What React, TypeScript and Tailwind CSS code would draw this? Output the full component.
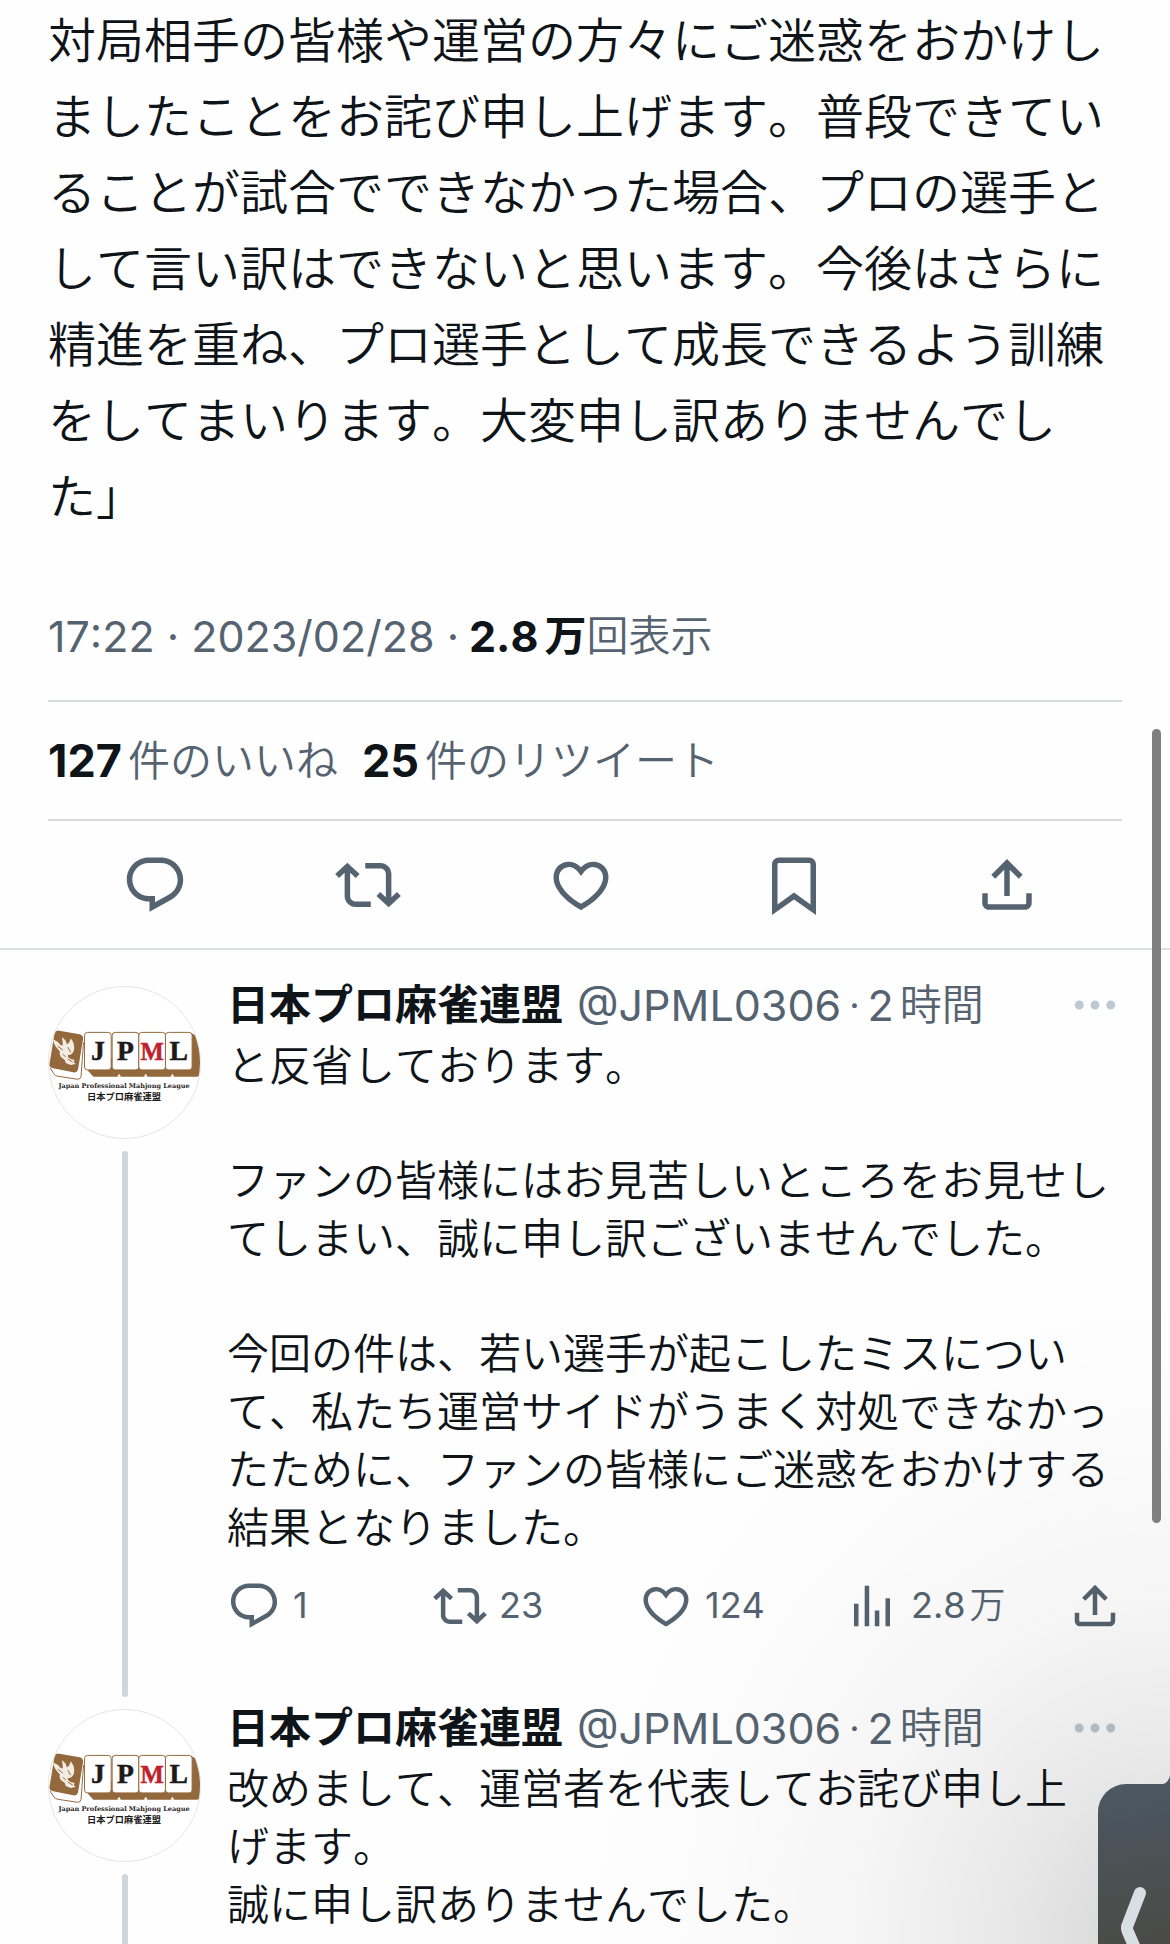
import React from "react";

const PATHS = {
  reply:
    "M1.751 10c0-4.42 3.584-8 8.005-8h4.366c4.49 0 8.129 3.64 8.129 8.13 0 2.96-1.607 5.68-4.196 7.11l-8.054 4.46v-3.69h-.067c-4.49.1-8.183-3.51-8.183-8.01zm8.005-6c-3.317 0-6.005 2.69-6.005 6 0 3.37 2.77 6.08 6.138 6.01l.351-.01h1.761v2.3l5.087-2.81c1.951-1.08 3.163-3.13 3.163-5.36 0-3.39-2.744-6.13-6.129-6.13H9.756z",
  repost:
    "M4.5 3.88l4.432 4.14-1.364 1.46L5.5 7.55V16c0 1.1.896 2 2 2H13v2H7.5c-2.209 0-4-1.79-4-4V7.55L1.432 9.48.068 8.02 4.5 3.88zM16.5 6H11V4h5.5c2.209 0 4 1.79 4 4v8.45l2.068-1.93 1.364 1.46-4.432 4.14-4.432-4.14 1.364-1.46 2.068 1.93V8c0-1.1-.896-2-2-2z",
  like: "M16.697 5.5c-1.222-.06-2.679.51-3.89 2.16l-.805 1.09-.806-1.09C9.984 6.01 8.526 5.44 7.304 5.5c-1.243.07-2.349.78-2.91 1.91-.552 1.12-.633 2.78.479 4.82 1.074 1.97 3.257 4.27 7.129 6.61 3.87-2.34 6.052-4.64 7.126-6.61 1.111-2.04 1.03-3.7.477-4.82-.561-1.13-1.666-1.84-2.908-1.91zm4.187 7.69c-1.351 2.48-4.001 5.12-8.379 7.67l-.503.3-.504-.3c-4.379-2.55-7.029-5.19-8.382-7.67-1.36-2.5-1.41-4.86-.514-6.67.887-1.79 2.647-2.91 4.601-3.01 1.651-.09 3.368.56 4.798 2.01 1.429-1.45 3.146-2.1 4.796-2.01 1.954.1 3.714 1.22 4.601 3.01.896 1.81.846 4.17-.514 6.67z",
  bookmark:
    "M4 4.5C4 3.12 5.119 2 6.5 2h11C18.881 2 20 3.12 20 4.5v18.44l-8-5.71-8 5.71V4.5zM6.5 4c-.276 0-.5.22-.5.5v14.56l6-4.29 6 4.29V4.5c0-.28-.224-.5-.5-.5h-11z",
  share:
    "M12 2.59l5.7 5.7-1.41 1.42L13 6.41V16h-2V6.41l-3.3 3.3-1.41-1.42L12 2.59zM21 15l-.02 3.51c0 1.38-1.12 2.49-2.5 2.49H5.5C4.11 21 3 19.88 3 18.5V15h2v3.5c0 .28.22.5.5.5h12.98c.28 0 .5-.22.5-.5L19 15h2z",
  views: "M8.75 21V3h2v18h-2zM18 21V8.5h2V21h-2zM4 21l.004-10h2L6 21H4zm9.248 0v-7h2v7h-2z",
  more: "M3 12c0-1.1.9-2 2-2s2 .9 2 2-.9 2-2 2-2-.9-2-2zm9 2c1.1 0 2-.9 2-2s-.9-2-2-2-2 .9-2 2 .9 2 2 2zm7 0c1.1 0 2-.9 2-2s-.9-2-2-2-2 .9-2 2 .9 2 2 2z",
};

type IconName = keyof typeof PATHS;

function Icon({ name, className }: { name: IconName; className: string }) {
  return (
    <svg viewBox="0 0 24 24" aria-hidden="true" className={className} fill="currentColor">
      <path d={PATHS[name]} />
    </svg>
  );
}

const TILES = [
  { x: 36, letter: "J", color: "#1d1a1a" },
  { x: 64, letter: "P", color: "#1d1a1a" },
  { x: 91, letter: "M", color: "#c01f2e" },
  { x: 118, letter: "L", color: "#1d1a1a" },
];

function Avatar() {
  return (
    <svg
      viewBox="0 0 153 153"
      role="img"
      aria-label="日本プロ麻雀連盟"
      className="block size-[153px] shrink-0 overflow-hidden rounded-full border border-[#e3e5e7] bg-white"
    >
      <path d="M36 81l9 10h104q5 0 5-5V61q0-10-9-14z" fill="#93683c" />
      {TILES.map((t) => (
        <g key={t.letter}>
          <rect x={t.x} y="46" width="27" height="38" rx="3" fill="#fff" stroke="#93683c" strokeWidth="1" />
          <text
            x={t.x + 13.5}
            y="74"
            textAnchor="middle"
            fontFamily="Liberation Serif, serif"
            fontWeight="700"
            fontSize={t.letter === "M" ? 25 : 28}
            fill={t.color}
            stroke={t.color}
            strokeWidth="0.5"
          >
            {t.letter}
          </text>
        </g>
      ))}
      <path d="M69 91l2-3 2 3zM96 91l2-3 2 3zM123 91l2-3 2 3z" fill="#fff" />
      <path d="M1 82l4 6q1 2 4 2.500l20 3q3 0 3.500-3L35 56" fill="#fff" stroke="#93683c" strokeWidth="1" />
      <path d="M9 44l22 4q4 1 3.500 5l-5 30q-1 4-5 3.500L3 82q-3-1-2.500-4l5-31q1-3 3.500-3z" fill="#93683c" />
      <path
        d="M4 53q5 2 8 6l2 0q0-4-1-8 4 2 5 7 3-1 4-6 5 6 3 13-2 4-6 4 0 3 3 4l4 1-1 2 2 2-5 1-5-2-1-3-4-3q-2-3-1-6-6-5-7-12z"
        fill="#f4ece2"
      />
      <path d="M9 60l5 4M19 61l3 5M14 68l3 3M19 73l5 3" stroke="#93683c" strokeWidth="1" />
      <text
        x="76"
        y="102"
        textAnchor="middle"
        fontFamily="DejaVu Serif, serif"
        fontWeight="700"
        fontSize="6.6"
        fill="#2b2626"
      >
        Japan Professional Mahjong League
      </text>
      <text
        x="76"
        y="115"
        textAnchor="middle"
        fontFamily="Noto Sans CJK JP, sans-serif"
        fontWeight="700"
        fontSize="9.400"
        fill="#1d1a1a"
      >
        日本プロ麻雀連盟
      </text>
    </svg>
  );
}

interface ReplyProps {
  paragraphs: string[];
  last?: boolean;
  children?: React.ReactNode;
}

function Reply({ paragraphs, last, children }: ReplyProps) {
  return (
    <article className={last ? "flex flex-1 gap-[26px] px-12" : "flex gap-[26px] px-12"}>
      <div className="flex flex-col items-center gap-3 pt-[10px]">
        <Avatar />
        <div
          className={
            last
              ? "w-[6px] flex-1 rounded-t-full bg-[#cfd7dd]"
              : "mb-[2px] w-[6px] flex-1 rounded-full bg-[#cfd7dd]"
          }
        />
      </div>
      <div className="min-w-0 flex-1">
        <header className="flex h-[58px] items-center text-[42px] leading-[58px] whitespace-nowrap">
          <h2 className="font-bold text-[#0f1419]">日本プロ麻雀連盟</h2>
          <p className="ml-[14px] flex items-center font-[350] text-[#556370]">
            <span className="text-[43px] font-normal">@JPML0306</span>
            <span className="mx-2 text-[36px] font-normal">·</span>
            <span className="mr-[6px] text-[43px] font-normal">2</span>時間
          </p>
          <button type="button" aria-label="もっと見る" className="ml-auto text-[#bdc9d1]">
            <Icon name="more" className="block size-[54px]" />
          </button>
        </header>
        <div className="mt-[3px] flex flex-col gap-[57px] text-[42px] leading-[58px] font-[350] text-[#0f1419]">
          {paragraphs.map((p) => (
            <p key={p} className="whitespace-pre-line">
              {p}
            </p>
          ))}
        </div>
        {children}
      </div>
    </article>
  );
}

const REPLY_ACTIONS: { name: IconName; label: string; count: string; unit?: string }[] = [
  { name: "reply", label: "返信", count: "1" },
  { name: "repost", label: "リツイート", count: "23" },
  { name: "like", label: "いいね", count: "124" },
  { name: "views", label: "表示回数", count: "2.8", unit: "万" },
];

const POST_ACTIONS: { name: IconName; label: string }[] = [
  { name: "reply", label: "返信" },
  { name: "repost", label: "リツイート" },
  { name: "like", label: "いいね" },
  { name: "bookmark", label: "ブックマーク" },
  { name: "share", label: "共有" },
];

export default function App() {
  return (
    <div
      lang="ja"
      className="relative flex min-h-screen flex-col overflow-hidden bg-[#fefefe] font-['Inter','Noto_Sans_CJK_JP',sans-serif] [font-kerning:none]"
    >
      <main className="flex flex-1 flex-col">
        <section className="px-12">
          <p className="pt-[3px] text-[48px] leading-[76px] font-[350] text-[#0f1419]">
            対局相手の皆様や運営の方々にご迷惑をおかけしましたことをお詫び申し上げます。普段できていることが試合でできなかった場合、プロの選手として言い訳はできないと思います。今後はさらに精進を重ね、プロ選手として成長できるよう訓練をしてまいります。大変申し訳ありませんでした」
          </p>
          <p className="mt-[72px] flex items-center border-b-2 border-[#d9dcdf] pb-[35px] text-[42px] leading-[58px] font-[350] text-[#556370]">
            <time className="text-[43px] font-normal">17:22 · 2023/02/28 ·</time>
            <strong className="ml-[10px] flex items-center gap-[6px] font-bold text-[#0f1419]">
              <span className="text-[43px]">2.8</span>万
            </strong>
            回表示
          </p>
          <div className="flex h-[119px] items-center gap-6 border-b-2 border-[#d5d9e0] text-[42px] font-[350] text-[#556370]">
            <a href="#likes" className="flex items-center gap-[6px]">
              <strong className="text-[45px] font-bold text-[#0f1419]">127</strong>件のいいね
            </a>
            <a href="#retweets" className="flex items-center gap-[6px]">
              <strong className="text-[45px] font-bold text-[#0f1419]">25</strong>件のリツイート
            </a>
          </div>
        </section>
        <div className="flex h-[129px] items-center border-b-2 border-[#dcdfe2] pr-14 pl-12 text-[#556370]">
          {POST_ACTIONS.map((a) => (
            <div key={a.name} className="flex flex-1 justify-center">
              <button type="button" aria-label={a.label}>
                <Icon name={a.name} className="block size-[66px]" />
              </button>
            </div>
          ))}
        </div>
        <section className="flex flex-1 flex-col pt-[26px]">
          <Reply
            paragraphs={[
              "と反省しております。",
              "ファンの皆様にはお見苦しいところをお見せしてしまい、誠に申し訳ございませんでした。",
              "今回の件は、若い選手が起こしたミスについて、私たち運営サイドがうまく対処できなかったために、ファンの皆様にご迷惑をおかけする結果となりました。",
            ]}
          >
            <div className="mt-[21px] mb-[66px] flex items-center text-[#556370]">
              <div className="flex flex-1 pr-[17px]">
                {REPLY_ACTIONS.map((a) => (
                  <button
                    key={a.name}
                    type="button"
                    aria-label={a.label}
                    className="flex flex-1 basis-0 items-center gap-[12px] text-[36px] leading-[55px] whitespace-nowrap"
                  >
                    <Icon name={a.name} className="block size-[54px] shrink-0" />
                    <span className="flex items-center gap-1 font-[350]">
                      <span className="font-normal">{a.count}</span>
                      {a.unit}
                    </span>
                  </button>
                ))}
              </div>
              <button type="button" aria-label="共有">
                <Icon name="share" className="block size-[54px]" />
              </button>
            </div>
          </Reply>
          <Reply
            last
            paragraphs={[
              "改めまして、運営者を代表してお詫び申し上\nげます。\n誠に申し訳ありませんでした。",
            ]}
          />
        </section>
      </main>

      <div className="pointer-events-none absolute right-0 bottom-0 h-[660px] w-[600px] bg-[radial-gradient(ellipse_100%_100%_at_100%_100%,rgba(0,0,0,0.17)_0%,rgba(0,0,0,0.085)_28%,rgba(0,0,0,0.035)_52%,rgba(0,0,0,0.01)_78%,rgba(0,0,0,0)_100%)]" />
      <div className="absolute top-[729px] right-[9px] h-[794px] w-[9px] rounded-full bg-[#7f7f7f]" />
      <button
        type="button"
        aria-label="戻る"
        className="absolute right-0 bottom-0 h-[160px] w-[72px] rounded-tl-[28px] bg-[linear-gradient(170deg,#4c5960_0%,#4b545d_28%,#4a5150_60%,#4a4a47_100%)]"
      >
        <svg viewBox="0 0 72 170" aria-hidden="true" className="absolute -top-[10px] left-0 h-[170px] w-[72px]">
          <path d="M62 10.500q8 0 10-9v9z" fill="#4c5960" />
          <path
            d="M42 119L30 150q-2 4 0 8l14 32"
            fill="none"
            stroke="#d7dfe4"
            strokeWidth="12"
            strokeLinecap="round"
            strokeLinejoin="round"
          />
        </svg>
      </button>
    </div>
  );
}
